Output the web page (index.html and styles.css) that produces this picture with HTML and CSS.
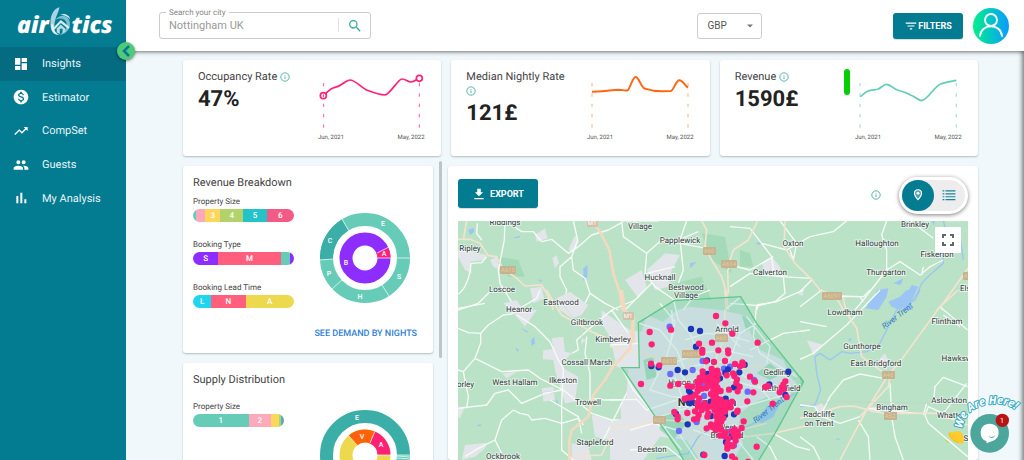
FILE: index.html
```html
<!DOCTYPE html>
<html lang="en">
<head>
<meta charset="utf-8">
<title>airbtics – Insights</title>
<link rel="stylesheet" href="styles.css">
</head>
<body>
<svg class="defs" aria-hidden="true">
  <symbol id="info" viewBox="0 0 24 24"><circle cx="12" cy="12" r="10" fill="none" stroke="currentColor" stroke-width="2"/><path d="M11 7h2v2h-2zM11 11h2v6h-2z" fill="currentColor"/></symbol>
</svg>
<div class="app">
  <aside class="sidebar">
    <a class="logo" href="#" aria-label="airbtics home">
      <span>air</span>
      <svg viewBox="9 0 60 84" width="21" height="29" aria-hidden="true">
        <path d="M36 1C18 6 11 24 10 42C9 62 13 78 30 81C18 70 20 52 24 38C27 24 33 18 36 1Z" fill="#a9d4e3"/>
        <path d="M24 38C34 20 62 20 66 44C69 62 56 78 36 81C52 70 60 60 56 45C52 33 36 30 24 38Z" fill="#7fbdd2"/>
        <path d="M38 22C52 16 66 24 68 38C60 26 48 24 38 22Z" fill="#d6edf4"/>
        <path d="M16 62L40 38L66 59L61 63L40 46L22 65Z" fill="#d6edf4"/>
        <path d="M28 62L40 51L53 63V72L45 76V63H37V78L28 74Z" fill="#b9dce8"/>
        <path d="M12 50C12 70 20 80 36 81C24 76 18 66 18 50Z" fill="#e4f4f8"/>
      </svg>
      <span>tics</span>
    </a>
    <nav>
      <ul class="menu">
        <li><a class="item active" href="#"><svg viewBox="0 0 24 24"><path d="M3 13h8V3H3zm0 8h8v-6H3zm10 0h8V11h-8zm0-18v6h8V3z"/></svg>Insights</a></li>
        <li><a class="item" href="#"><svg viewBox="0 0 24 24"><path d="M12 1C5.900 1 1 5.900 1 12s4.900 11 11 11 11-4.900 11-11S18.100 1 12 1zm1.400 17v2h-2.700v-2c-1.700-.4-3.100-1.500-3.200-3.400h2c.1 1 .8 1.900 2.600 1.900 1.900 0 2.400-1 2.400-1.600 0-.8-.4-1.600-2.700-2.100-2.500-.6-4.200-1.600-4.200-3.700 0-1.700 1.400-2.800 3.100-3.200V4h2.700v2c1.900.5 2.800 1.900 2.900 3.400h-2c-.1-1.100-.6-1.900-2.200-1.900-1.500 0-2.400.7-2.400 1.600 0 .8.700 1.400 2.700 1.900s4.200 1.400 4.200 3.900c0 1.800-1.400 2.800-3.200 3.100z"/></svg>Estimator</a></li>
        <li><a class="item" href="#"><svg viewBox="0 0 24 24"><path d="M16 6l2.300 2.300-4.900 4.900-4-4L2 16.600 3.400 18l6-6 4 4 6.300-6.300L22 12V6z"/></svg>CompSet</a></li>
        <li><a class="item" href="#"><svg viewBox="0 0 24 24"><path d="M16 11a3 3 0 1 0 0-6 3 3 0 0 0 0 6zm-8 0a3 3 0 1 0 0-6 3 3 0 0 0 0 6zm0 2c-2.300 0-7 1.200-7 3.500V19h14v-2.500C15 14.200 10.300 13 8 13zm8 0h-1c1.200.8 2 2 2 3.500V19h6v-2.500c0-2.300-4.700-3.500-7-3.500z"/></svg>Guests</a></li>
        <li><a class="item" href="#"><svg viewBox="0 0 24 24"><path d="M5 9h3v11H5zm6-5h3v16h-3zm6 10h3v6h-3z"/></svg>My Analysis</a></li>
      </ul>
    </nav>
    <button class="collapse" type="button" aria-label="Collapse menu"><svg viewBox="0 0 18 18"><path d="M12 4L7 9l5 5" fill="none" stroke="#067a91" stroke-width="2.500"/></svg></button>
  </aside>

  <div class="main">
    <header class="topbar">
      <fieldset class="search">
        <legend><label for="city">Search your city</label></legend>
        <input id="city" type="text" value="Nottingham UK">
        <button type="button" aria-label="Search"><svg viewBox="0 0 24 24"><path fill="#37aa9d" d="M15.500 14h-.8l-.3-.3A6.500 6.500 0 1 0 13.700 14.400l.3.300v.8l5 5 1.500-1.500zm-6 0a4.500 4.500 0 1 1 0-9 4.500 4.500 0 0 1 0 9z"/></svg></button>
      </fieldset>
      <div class="space wide"></div>
      <div class="currency">
        <select aria-label="Currency"><option>GBP</option></select>
        <svg viewBox="0 0 10 5" aria-hidden="true"><path d="M0 0h10L5 5z" fill="#777"/></svg>
      </div>
      <div class="space"></div>
      <button class="btn filters" type="button"><svg viewBox="0 0 24 24"><path d="M10 18h4v-2h-4zM3 6v2h18V6zm3 7h12v-2H6z"/></svg>FILTERS</button>
      <button class="avatar" type="button" aria-label="Account"><svg viewBox="0 0 36 36"><g fill="none" stroke="#fff" stroke-width="1.800" stroke-linecap="round"><circle cx="18" cy="12" r="6"/><path d="M7 28C8 15 28 15 29 28"/></g></svg></button>
    </header>

    <main class="content">
      <section class="stats">
        <article class="card stat">
          <div class="info"><h2>Occupancy Rate <svg class="i"><use href="#info"/></svg></h2><p>47%</p></div>
          <svg class="chart" viewBox="0 0 120 96">
            <g transform="scale(.33333) translate(-399 -15)" fill="none" stroke="#ff2176">
              <path d="M431 84V220M718 84V220" stroke-width="3" stroke-dasharray="10 21" opacity=".75"/>
              <path d="M430 122C444 110 450 100 465 97C490 92 495 75 510 75C525 75 545 98 562 106C575 111 605 120 615 120C630 118 655 72 665 72C678 72 682 81 693 81C705 80 708 73 718 70" stroke-width="5"/>
              <circle cx="430" cy="122" r="9" fill="#fff" stroke-width="5"/><circle cx="718" cy="70" r="9" fill="#fff" stroke-width="5"/><path d="M430 118V126" stroke-width="3"/>
            </g>
            <text x="18" y="79" text-anchor="middle">Jun, 2021</text><text x="98" y="79" text-anchor="middle">May, 2022</text>
          </svg>
        </article>
        <article class="card stat">
          <div class="info"><h2>Median Nightly Rate <svg class="i"><use href="#info"/></svg></h2><p>121£</p></div>
          <svg class="chart" viewBox="0 0 120 96">
            <g transform="scale(.33333) translate(-411 -15)" fill="none" stroke="#ff6610">
              <path d="M441 84V220M729 84V220" stroke-width="4" stroke-dasharray="10 21" opacity=".4"/>
              <path d="M441 110C490 110 500 105 520 104C530 104 540 108 548 106C556 100 562 66 572 66C582 66 588 98 600 101C612 105 640 109 650 109L678 108C688 102 693 76 703 76C713 76 720 92 729 98" stroke-width="6"/>
            </g>
            <text x="18" y="79" text-anchor="middle">Jun, 2021</text><text x="98" y="79" text-anchor="middle">May, 2022</text>
          </svg>
        </article>
        <article class="card stat">
          <div class="info"><h2>Revenue <svg class="i"><use href="#info"/></svg></h2><p>1590£</p></div>
          <span class="marker"></span>
          <svg class="chart" viewBox="0 0 120 96">
            <g transform="scale(.33333) translate(-405 -15)" fill="none" stroke="#62cdb6">
              <path d="M435 84V220M724 84V220" stroke-width="4" stroke-dasharray="10 21" opacity=".5"/>
              <path d="M436 125C448 116 453 108 465 106C475 104 482 105 490 102C500 97 506 88 515 88C527 88 535 102 547 105C575 112 578 114 595 124C605 130 612 137 620 137C640 133 655 97 677 87C690 82 710 79 724 76" stroke-width="5"/>
            </g>
            <text x="18" y="79" text-anchor="middle">Jun, 2021</text><text x="98" y="79" text-anchor="middle">May, 2022</text>
          </svg>
        </article>
      </section>

      <div class="columns">
        <div class="side">
          <section class="card panel">
            <h2>Revenue Breakdown</h2>
            <div class="split">
              <div class="bars">
                <h3>Property Size</h3>
                <div class="bar"><span class="teal" style="width:3%"></span><span class="pink" style="width:9%"></span><span class="amber" style="width:15%">3</span><span class="lime" style="width:23%">4</span><span class="cyan" style="width:23%">5</span><span class="rose" style="width:27%">6</span></div>
                <h3>Booking Type</h3>
                <div class="bar"><span class="violet" style="width:25%">S</span><span class="coral" style="width:62%">M</span><span class="teal" style="width:9%"></span><span class="violet" style="width:4%"></span></div>
                <h3>Booking Lead Time</h3>
                <div class="bar"><span class="sky" style="width:18%">L</span><span class="coral" style="width:34%">N</span><span class="yellow" style="width:48%">A</span></div>
              </div>
              <svg class="pie" viewBox="-45 -45 90 90">
                <g fill="none">
                  <circle r="38.500" stroke="#66ccb7" stroke-width="13"/>
                  <circle r="38.500" stroke="#3aaea7" stroke-width="13" pathLength="360" stroke-dasharray="61 299" stroke-dashoffset="-178"/>
                  <circle r="19" stroke="#8e2dff" stroke-width="13"/>
                  <circle r="19" stroke="#ff2176" stroke-width="13" pathLength="360" stroke-dasharray="24 336" stroke-dashoffset="-336"/>
                  <path stroke="#fff" stroke-width=".7" d="M12 0H26M12 -5L24 -11M32 0H45M17 27L24 38M-23 22L-33 31M-32 1L-45 2M-16 -27L-23 -39"/>
                </g>
                <text x="18" y="-32">E</text><text x="34" y="21">S</text><text x="-5" y="41">H</text><text x="-36" y="18">P</text><text x="-35" y="-15">C</text><text x="-19" y="7">B</text><text x="19" y="-2">A</text>
              </svg>
            </div>
            <a class="more" href="#">SEE DEMAND BY NIGHTS</a>
          </section>
          <section class="card panel supply">
            <h2>Supply Distribution</h2>
            <div class="split">
              <div class="bars">
                <h3>Property Size</h3>
                <div class="bar short"><span class="teal" style="width:61%">1</span><span class="pink" style="width:25%">2</span><span class="amber" style="width:8%"></span><span class="lime" style="width:3%"></span><span class="cyan" style="width:2%"></span><span class="rose" style="width:1%"></span></div>
              </div>
              <svg class="pie" viewBox="-45 -45 90 90">
                <g fill="none">
                  <circle r="38.500" stroke="#3aaea7" stroke-width="13"/>
                  <circle r="38.500" stroke="#66ccb7" stroke-width="13" pathLength="360" stroke-dasharray="40 320"/>
                  <circle r="19" stroke="#ecd94d" stroke-width="13"/>
                  <circle r="19" stroke="#ff6208" stroke-width="13" pathLength="360" stroke-dasharray="63 297" stroke-dashoffset="-230"/>
                  <circle r="19" stroke="#ff2176" stroke-width="13" pathLength="360" stroke-dasharray="67 293" stroke-dashoffset="-293"/>
                  <path stroke="#fff" stroke-width=".7" d="M12 0H26M5 -12L10 -24M-8 -10L-17 -20M32 0H45M32 1L45 2M32 3L45 4"/>
                </g>
                <text x="-8" y="-35">E</text><text x="-3" y="-16">V</text><text x="16" y="-8">A</text>
              </svg>
            </div>
          </section>
        </div>
        <div class="thumb"></div>

        <section class="card mapcard">
          <div class="toolbar">
            <button class="btn export" type="button"><svg viewBox="0 0 24 24"><path d="M19 9h-4V3H9v6H5l7 7zM4 19v2h16v-2z"/></svg>EXPORT</button>
            <svg class="i"><use href="#info"/></svg>
            <div class="toggle">
              <button class="on" type="button" aria-label="Map view"><svg viewBox="0 0 24 24"><path d="M12 3a6 6 0 0 0-6 6c0 4.500 6 11 6 11s6-6.500 6-11a6 6 0 0 0-6-6z" fill="#4d9fb1" stroke="#fff" stroke-width="2"/><circle cx="12" cy="9" r="2.500" fill="#fff"/></svg></button>
              <button type="button" aria-label="List view"><svg viewBox="0 0 24 24"><path d="M1 4h3v2H1zm0 5h3v2H1zm0 5h3v2H1zm0 5h3v2H1zM6 4h17v2H6zm0 5h17v2H6zm0 5h17v2H6zm0 5h17v2H6z" fill="#16849a"/></svg></button>
            </div>
          </div>
          <div class="map">
            <svg class="canvas" viewBox="458 221 510 239" preserveAspectRatio="xMidYMin slice" role="img" aria-label="Map of listings around Nottingham">
              <rect x="358" y="121" width="710" height="439" fill="#bae2c6"/>
              <!-- north west -->
              <g transform="translate(445 160) scale(.33333)">
                <g class="wood"><path d="M160 290L220 300 240 350 190 350zM690 370L770 350 800 420 730 410zM770 220L840 230 860 340 800 300z"/></g>
                <g class="town"><path d="M39 270L80 275 125 285 120 300 75 305 80 340 60 330 39 290zM270 225L300 205 308 235 275 245zM370 270L390 225 402 245 385 275zM322 295L335 285 342 310 330 325zM135 300L155 290 165 330 145 320zM540 360L590 330 605 380 580 415zM605 330L660 280 705 285 680 330 670 380 630 390zM255 385L290 380 297 415 265 430z"/></g>
                <path class="water" d="M415 325L428 315 427 350 415 362zM70 210L85 203 88 215 75 225zM200 235L225 227 222 233zM280 358L292 362 285 366zM735 310L755 305 735 325z"/>
                <g class="road"><path d="M39 402C60 390 76 350 78 310L110 308 125 290M180 182L178 240 168 290 160 330 165 370 190 410 215 450M97 190L95 220 110 240M180 182L230 215 265 215 290 245 320 238 370 280 400 260 440 225 490 210 530 188M385 182L398 240 380 290 345 320 345 350 365 390 360 415 345 450M380 290L385 330 420 355 435 400 420 430 400 450M435 400L480 430 520 450M530 182L535 230 605 280 600 340 630 380 688 420M605 280L650 240 700 240 760 215M725 182L705 240 715 330 700 370M705 250L785 265M540 450L590 400 620 370M605 340L690 320M39 445L120 430"/></g>
                <g class="major"><path d="M65 182L55 240M39 238L75 238 105 250 130 287 155 290 175 330 210 350 240 378 290 375 310 410 325 450M770 182L785 210 780 260 800 300 830 350 845 400 850 450M875 300L848 330 850 400"/><path class="mway" d="M440 182L465 215 493 270 505 340 525 400 532 450"/></g>
              </g>
              <!-- north east -->
              <g transform="translate(730 160) scale(.33333)">
                <g class="wood"><path d="M30 270L60 280 70 320 30 320z"/></g>
                <g class="town"><path d="M95 310L125 290 150 320 155 340 110 345zM200 400L222 385 218 408z"/></g>
                <path class="water" d="M405 445L430 425 440 390 475 385 470 410 445 450zM490 370L520 355 512 375zM525 410L545 375 565 380 540 425zM75 250L95 245 90 255zM605 185L615 182 612 195zM515 450L535 430 550 450z"/>
                <path class="river" d="M640 182L650 220 640 290 640 310 605 340 575 370 562 400 525 450M690 230L700 300"/>
                <g class="road"><path d="M0 200L60 205 95 250 170 270 240 230 310 215 350 182M150 182L200 250 190 300 180 270M95 250L125 290 130 330 160 350 165 400 135 425 85 437 0 430M0 380L60 340 100 345 155 350 245 355M470 182L455 225 470 270 470 330 400 420 375 450M470 330L510 305 570 345 600 320 640 300M540 182L610 235M335 408L390 410 400 425M210 395L245 360M85 437L80 450M575 345L580 320M650 182L690 182M0 315L60 330 130 290"/></g>
                <g class="major"><path d="M83 182L55 240 10 270 0 300M165 182L162 260 195 310 245 358 270 390 320 415 340 450M714 325L640 430 620 450"/></g>
              </g>
              <!-- south west -->
              <g transform="translate(445 290) scale(.33333)">
                <g class="town"><path d="M175 40L215 30 235 60 275 60 240 110 215 80zM335 25L375 5 430 45 410 75 380 85 345 60zM470 60L510 90 555 120 560 160 500 150 470 100zM320 145L355 140 360 185 380 190 355 215 355 235 400 260 390 335 360 340 330 240 325 210 293 208 295 180 325 178zM290 295L325 290 330 330 295 335zM172 250L215 245 185 265zM410 145L422 150 408 165zM39 350L60 350 45 385 39 380zM60 465L125 458 120 475 90 500 50 510zM440 375L500 390 530 430 500 450 450 440zM555 170L570 170V510H540L560 400 530 400 525 340 545 330zM380 460L430 470 440 510 380 510zM510 460L570 440V510H500z"/></g>
                <path class="water" d="M258 150L268 140 270 160 260 168zM210 172L222 180 218 186zM335 325L340 340 333 345zM95 405L110 403 105 410zM228 115L250 125 245 128z"/>
                <g class="road"><path d="M39 115L70 128 107 130 130 105 175 75 200 72 215 60 275 25 285 0M107 130L107 160 90 205 55 245 70 320 65 355M90 205L170 245 250 240 285 265 355 300 440 370 500 390 570 390M39 355L125 345 150 310 190 300 230 340 300 310 350 300M205 360L170 390 150 450 100 475 60 500M205 360L225 370 250 375 260 390 300 385 350 400 400 385 415 405M215 75L270 110 315 155 340 210 355 235 350 340 350 420 350 480 385 510M380 190L400 180 395 150 440 110 500 60 570 30M425 140L420 190 435 250 435 330M500 60L550 130 570 140M440 325L480 330 570 328M475 450L510 380 570 260M315 330L400 380 410 430M39 240L55 245M39 60L100 40 140 0M150 450L170 490"/></g>
                <g class="major"><path d="M305 0L330 45 350 75 440 125 510 155 570 165M380 500L470 495 490 450 520 415 570 412"/><path class="mway" d="M525 0L535 60 565 80 555 175 510 220 480 270 445 315 430 380 380 420 373 450 373 510"/></g>
                <path d="M300 325C280 310 300 295 330 310M320 0L390 90 380 200M430 60L410 140M400 300L430 420" fill="none" stroke="#cfdcd5" stroke-width="2"/>
              </g>
              <!-- Nottingham -->
              <g transform="translate(610 290) scale(.33333)">
                <path class="town" d="M0 140L40 150 60 120 95 125 110 75 160 95 200 60 240 50 330 60 400 75 430 150 450 180 520 210 540 260 560 280 530 330 470 320 430 340 390 370 385 430 400 460 370 510H270L230 450 150 440 100 510H0L0 400 45 380 55 240 20 230z"/>
                <path class="water" d="M440 390L470 350 515 330 490 380 455 400z"/>
                <path class="river" d="M140 505L235 490 265 440 320 405 380 430 430 400 470 385 510 340 555 310"/>
                <path class="wood" d="M100 210L130 200 140 260 110 270zM145 380L200 360 230 400 190 450 150 420zM440 250L480 220 520 250 480 270zM395 75L430 100 410 125zM310 410L350 400 350 440 310 450z"/>
                <g class="road"><path d="M0 165L88 160M192 35L205 90 240 130 260 180M185 60L190 130 170 200 120 300 185 320 280 330M88 100L150 120 200 180 225 240 290 250M392 20L345 60 345 140 320 200 310 300M440 100L390 130 370 180 340 250M440 45L500 35 580 0M440 45L430 140 450 190 510 230 560 260M225 150L290 130 350 135 420 155M110 220L200 215 270 190 340 180 430 200M0 330L80 328 110 360 200 330M35 233L70 300 130 370 215 480M150 380L240 350 310 360 400 350 540 310M330 370L345 430 390 460 430 510M250 420L310 440 380 435M60 420L130 400 200 420 260 510M440 440L480 470 500 510M195 260L215 320 205 380M390 250L440 280 490 340M420 180L520 130 600 120M220 60L250 20 300 0M285 190L280 300 230 370M240 230L330 215 400 240M490 430L560 470 600 480M180 200L230 280 300 300M150 40L195 95 180 160M320 100L390 170M410 80L480 170 470 220M360 270L470 300M60 480L170 470 220 510"/></g>
                <g class="major"><path d="M345 0L350 100 335 180 310 270M0 170L95 190 170 215 250 260M0 415L60 410 160 390 250 395 350 420 410 440 490 430 600 405M240 180L230 280 250 360 275 430 265 510M310 270L430 230 560 250M350 430L470 400M210 180L320 160"/><path class="mway" d="M35 0L45 60 70 85 60 175 0 240M70 90L70 160"/></g>
                <path class="hull" d="M35 233H88L85 98 192 32 392 20 440 100 580 275 520 385 495 430 447 510 440 530H230L205 480z"/>
              </g>
              <!-- south east -->
              <g transform="translate(800 290) scale(.33333)">
                <g class="town"><path d="M20 150L70 165 40 195 30 170zM240 205L255 190 265 210 260 240 235 225zM45 350L65 340 75 355 60 375zM210 350L240 350 240 370 210 365z"/></g>
                <path class="water" d="M200 45L240 0 255 10 225 55zM275 50L265 35 300 20 320 0 350 0 330 40 300 60zM145 148L155 145 150 155zM105 445L122 447 115 450z"/>
                <path class="river" d="M360 0L345 30 290 60 265 110 240 160 200 185 150 190 125 185 90 210 60 190 45 200 50 250 62 300 45 345 0 350"/>
                <g class="road"><path d="M0 50L65 0M0 95L80 110M0 208L40 190 140 105 240 0M0 345L45 350 60 380 90 320 130 270 180 252 250 265M270 280L275 380 285 440 310 510M375 375L385 350 430 370 500 280M400 340L405 290 430 262 503 290M430 60L420 50 503 120M375 375L385 400 503 500M175 390L205 440 210 510M0 440L40 470 60 510M205 355L350 370M430 75L480 110M120 20L190 20 210 0M370 375L380 340M65 380L120 400 180 380"/></g>
                <g class="major"><path d="M60 0L130 25 140 70 170 115 185 200 240 240 270 255M475 0L420 50 300 215 265 255 200 360 120 510M0 385L120 350 160 348 200 358 250 370 410 370 503 405M270 260L265 290 180 380"/></g>
                <path class="hull" d="M0 260L10 275 0 298"/>
                <path d="M130 335L380 340 503 345M0 340L130 335" fill="none" stroke="#c3d1c9" stroke-width="2"/>
              </g>

              <g class="shield">
                <g fill="#c7b093"><rect x="500" y="266" width="16" height="8" rx="1"/><rect x="703" y="247" width="13" height="8" rx="1"/><rect x="721" y="260" width="16" height="8" rx="1"/><rect x="822" y="292" width="20" height="8" rx="1"/><rect x="882" y="371" width="13" height="8" rx="1"/><rect x="884" y="412" width="13" height="8" rx="1"/><rect x="963" y="272" width="13" height="8" rx="1"/><rect x="661" y="357" width="16" height="8" rx="1"/><rect x="682" y="350" width="19" height="8" rx="1"/><rect x="715" y="334" width="13" height="8" rx="1"/><rect x="653" y="416" width="13" height="8" rx="1"/></g>
                <g fill="#d6c0ab"><rect x="587" y="219" width="11" height="8" rx="1"/><rect x="623" y="312" width="11" height="8" rx="1"/></g>
                <g class="num"><text x="508" y="272">A610</text><text x="709" y="253">A60</text><text x="729" y="266">A614</text><text x="832" y="298">A6097</text><text x="888" y="377">A46</text><text x="890" y="418">A52</text><text x="969" y="278">A46</text><text x="669" y="363">A610</text><text x="691" y="356">A6514</text><text x="721" y="340">A60</text><text x="659" y="422">A52</text></g>
                <g class="num light"><text x="592" y="225">M1</text><text x="628" y="318">M1</text></g>
              </g>

              <g class="place">
                <text x="505" y="225">Riddings</text><text x="640" y="221">Newstead</text><text x="640" y="229">Village</text><text x="680" y="243">Papplewick</text><text x="470" y="251">Ripley</text><text x="502" y="292">Loscoe</text><text x="660" y="280">Hucknall</text><text x="686" y="290">Bestwood</text><text x="686" y="298">Village</text><text x="561" y="305">Eastwood</text><text x="519" y="312">Heanor</text><text x="587" y="325">Giltbrook</text><text x="613" y="342">Kimberley</text><text x="587" y="365">Cossall Marsh</text><text x="563" y="383">Ilkeston</text><text x="515" y="385">West Hallam</text><text x="462" y="387">Morley</text><text x="588" y="405">Trowell</text><text x="595" y="445">Stapleford</text><text x="503" y="459">Ockbrook</text><text x="652" y="452">Beeston</text><text x="727" y="332">Arnold</text><text x="777" y="375">Gedling</text><text x="781" y="391">Netherfield</text><text x="691" y="385">Hyson Green</text><text class="city" x="707" y="406">Nottingham</text><text x="727" y="430">West</text><text x="727" y="438">Bridgford</text>
                <text x="915" y="227">Brinkley</text><text x="793" y="246">Oxton</text><text x="877" y="246">Halloughton</text><text x="937" y="257">Fiskerton</text><text x="770" y="275">Calverton</text><text x="886" y="275">Thurgarton</text><text x="971" y="291">Elston</text><text x="845" y="315">Lowdham</text><text x="947" y="324">Flintham</text><text x="862" y="349">Gunthorpe</text><text x="876" y="366">East Bridgford</text><text x="964" y="361">Hawksworth</text><text x="949" y="403">Aslockton</text><text x="892" y="410">Bingham</text><text x="819" y="417">Radcliffe</text><text x="819" y="426">on Trent</text><text x="952" y="418">Whatton</text><text x="984" y="441">Scarrington</text>
                <text class="stream" transform="translate(770 412) rotate(-38)">River Trent</text><text class="stream" transform="translate(899 318) rotate(-38)">River Trent</text>
              </g>

              <g class="dots" transform="translate(610 290) scale(.33333)">
                <path stroke="#6a6cff" d="M179 110h0M181 252h0M248 240h0M278 213h0M432 270h0M413 305h0M207 423h0M260 396h0M282 318h0M342 236h0M372 466h0M360 230h0M278 285h0M196 370h0M360 425h0M290 292h0M275 340h0"/>
                <path stroke="#1b36b8" d="M243 117h0M270 123h0M258 170h0M124 228h0M146 232h0M203 240h0M225 247h0M535 245h0M404 224h0M388 247h0M291 211h0M354 238h0M346 248h0M372 292h0M478 283h0M526 315h0M237 302h0M242 310h0M240 340h0M233 403h0M198 372h0M372 373h0M347 326h0M344 498h0M280 494h0M348 456h0M292 252h0M330 265h0M303 378h0M345 375h0M365 440h0M325 360h0M232 330h0M245 337h0M302 335h0"/>
                <path stroke="#ff2176" d="M318 78h0M346 100h0M367 131h0M183 119h0M119 126h0M125 163h0M123 221h0M148 226h0M93 282h0M181 287h0M205 282h0M443 158h0M267 161h0M306 158h0M277 180h0M277 188h0M325 181h0M354 181h0M355 190h0M288 214h0M312 216h0M345 213h0M397 217h0M399 224h0M390 229h0M375 222h0M420 260h0M435 275h0M430 307h0M412 334h0M474 288h0M466 291h0M526 274h0M520 284h0M522 297h0M509 307h0M530 321h0M515 292h0M488 341h0M193 366h0M203 380h0M203 388h0M232 369h0M224 326h0M235 323h0M401 394h0M395 414h0M440 470h0M283 495h0M366 499h0M375 508h0M414 515h0M233 288h0M246 290h0M265 290h0M263 303h0M270 277h0M278 244h0M278 256h0M269 264h0M262 275h0M285 270h0M295 262h0M305 237h0M306 250h0M314 257h0M310 268h0M322 270h0M300 276h0M317 281h0M307 289h0M322 292h0M294 282h0M310 300h0M332 303h0M357 299h0M369 250h0M373 258h0M381 268h0M379 279h0M389 290h0M383 304h0M350 256h0M325 253h0M322 242h0M256 315h0M246 322h0M268 325h0M263 338h0M255 364h0M278 348h0M275 360h0M266 375h0M252 388h0M262 386h0M285 340h0M290 355h0M295 370h0M292 380h0M310 320h0M312 334h0M322 326h0M332 329h0M327 340h0M337 340h0M348 337h0M357 343h0M366 335h0M362 352h0M349 354h0M340 358h0M331 350h0M320 350h0M309 345h0M302 350h0M314 361h0M324 368h0M334 370h0M345 365h0M318 379h0M329 381h0M340 385h0M334 395h0M322 394h0M318 405h0M303 403h0M290 415h0M308 411h0M329 407h0M333 418h0M330 437h0M345 427h0M343 438h0M355 445h0M365 424h0M374 418h0M383 425h0M377 433h0M386 437h0M376 445h0M377 452h0M353 460h0M352 470h0M360 465h0M368 468h0M352 476h0M383 362h0M381 366h0M305 283h0M289 294h0M275 296h0M318 310h0M303 312h0M264 350h0M317 420h0M371 432h0"/>
              </g>
            </svg>
            <button class="full" type="button" aria-label="Full screen"><svg viewBox="0 0 12 12"><path d="M1 4V1h3M8 1h3v3M11 8v3H8M4 11H1V8" fill="none" stroke="#666" stroke-width="2"/></svg></button>
          </div>
        </section>
      </div>
    </main>
  </div>

  <button class="chat" type="button" aria-label="We are here! 1 new message">
    <svg viewBox="945 388 79 68">
      <path id="arc" d="M962 429C964 415 974 405 992 404C1006 403 1014 407 1026 418" fill="none"/>
      <g transform="translate(800 290) scale(.33333)">
        <path d="M446 432C444 424 452 424 456 428C462 424 468 423 476 424C488 425 492 442 492 456C488 462 480 461 470 458C458 454 446 444 446 432Z" fill="#fecb2b"/><path d="M448 430C450 443 462 453 474 457M436 450L446 458" fill="none" stroke="#f6b914" stroke-width="3"/>
        <circle cx="569" cy="430" r="58" fill="#4ca69b"/>
        <path d="M569 401C586 401 596 412 596 428C596 440 588 450 577 453L560 460 559 453C548 450 542 440 542 428C542 412 552 401 569 401Z" fill="#fff"/>
        <path d="M568 440C573 444 578 443 584 438" fill="none" stroke="#4ca69b" stroke-width="3"/>
        <circle cx="607" cy="391" r="20" fill="#b91414"/>
      </g>
      <text class="count" x="1002" y="423">1</text>
      <text class="here"><textPath href="#arc">We Are Here!</textPath></text>
    </svg>
  </button>
</div>
</body>
</html>
```
FILE: styles.css
```css
* { box-sizing: border-box; }
body { margin: 0; font-family: Roboto, "Liberation Sans", sans-serif; font-size: 11px; color: #444; overflow: hidden; text-rendering: geometricPrecision; }
h2, h3, p, ul { margin: 0; padding: 0; font-weight: 400; }
button { font: inherit; border: 0; padding: 0; cursor: pointer; }
.defs { position: absolute; width: 0; height: 0; }
.app { display: flex; height: 100vh; position: relative; overflow: hidden; }

.sidebar { width: 126px; flex: none; background: #037b91; position: relative; z-index: 3; }
.logo { display: flex; align-items: center; height: 47px; padding-left: 17px; color: #fff; text-decoration: none; font: italic 800 23px/30px "Open Sans", "Liberation Sans", sans-serif; }
.logo svg { margin: 0 1px 4px; }
.menu { list-style: none; display: grid; grid-auto-rows: 1fr; height: 168px; }
.item { display: flex; align-items: center; gap: 13px; height: 100%; padding-left: 13px; color: #e6f4f6; text-decoration: none; }
.item svg { width: 16px; height: 16px; fill: #fff; }
.item.active { background: #046b81; }
.collapse { position: absolute; right: -9px; top: 42px; width: 18px; height: 18px; border-radius: 50%; background: #4fca7b; box-shadow: 0 1px 3px rgba(0,0,0,.5); }
.collapse svg { display: block; }

.main { flex: 1; min-width: 0; display: flex; flex-direction: column; }
.topbar { display: flex; align-items: center; height: 51px; flex: none; padding: 0 15px 0 33px; background: #fff; box-shadow: 0 1px 4px rgba(0,0,0,.55); position: relative; z-index: 2; }
.space { flex: 2; }
.space.wide { flex: 5; }
.search { display: flex; align-items: center; width: 212px; height: 30px; margin: 0 0 4px; padding: 0 0 4px 6px; border: 1px solid #ccc; border-radius: 3px; min-width: 0; }
.search legend { padding: 0 3px; font-size: 8px; line-height: 8px; color: #888; }
.search input { flex: 1; min-width: 0; border: 0; outline: 0; padding: 0 3px; font: inherit; line-height: 13px; color: #999; background: none; }
.search button { width: 32px; height: 14px; border-left: 1px solid #e2e2e2; background: none; display: grid; place-items: center; }
.search button svg { width: 16px; height: 16px; }
.currency { position: relative; width: 65px; height: 26px; }
.currency select { appearance: none; width: 100%; height: 100%; padding: 0 9px; border: 1px solid #ccc; border-radius: 3px; background: #fff; font: 10px Roboto, sans-serif; color: #555; }
.currency svg { position: absolute; right: 9px; top: 11px; width: 6px; height: 4px; pointer-events: none; }
.btn { display: flex; align-items: center; justify-content: center; background: #037b91; color: #fff; border-radius: 3px; font-size: 9px; font-weight: 700; box-shadow: 0 1px 1px rgba(0,0,0,.15); }
.btn svg { fill: #fff; }
.filters { width: 70px; height: 26px; }
.filters svg { width: 14px; height: 14px; }
.avatar { width: 36px; height: 36px; margin-left: 10px; border-radius: 50%; background: linear-gradient(90deg, #00f08c, #0a9bff); }
.avatar svg { display: block; }

.content { flex: 1; min-height: 0; display: flex; flex-direction: column; gap: 10px; padding: 9px 46px 0 57px; background: #f0f8fb; box-shadow: inset -6px 0 4px -4px rgba(0,0,0,.5); }
.card { background: #fff; border-radius: 3px; box-shadow: 0 1px 2px rgba(60,80,90,.35); }
.stats { display: grid; grid-template-columns: repeat(3, 1fr); gap: 10px; flex: none; }
.stat { display: flex; height: 96px; padding-right: 8px; }
.info { flex: 1; min-width: 0; padding: 10px 10px 0 15px; }
.info h2 { font-size: 11px; line-height: 14px; }
.i { width: 10px; height: 10px; color: #37a69c; vertical-align: -2px; }
.info p { font-size: 22px; font-weight: 700; line-height: 32px; color: #222; }
.chart { width: 120px; height: 96px; flex: none; }
.chart text { font-size: 6px; fill: #555; }
.marker { width: 6px; height: 26px; margin-top: 9px; border-radius: 3px; background: #06cf06; }

.columns { flex: 1; min-height: 0; display: flex; }
.side { width: 250px; flex: none; display: flex; flex-direction: column; gap: 10px; }
.thumb { width: 3px; height: 197px; margin: -5px 6px 0; border-radius: 2px; background: #c1c4c6; flex: none; }
.panel { padding: 10px 10px 12px; flex: none; }
.panel h2 { font-size: 11px; line-height: 14px; margin-bottom: 7px; }
.supply h2 { margin-bottom: 15px; }
.split { display: flex; justify-content: space-between; }
.bars { width: 101px; }
.bars h3 { font-size: 8px; line-height: 10px; margin-bottom: 2px; white-space: nowrap; }
.bar { display: flex; height: 13px; border-radius: 7px; overflow: hidden; }
.bar + h3 { margin-top: 18px; }
.bar span { text-align: center; color: #fff; font-size: 8px; line-height: 13px; font-weight: 500; }
.short { width: 91px; }
.teal { background: #66ccb7; } .pink { background: #fca9bc; } .amber { background: #ffd65c; }
.lime { background: #b3d26b; } .cyan { background: #24c3c9; } .rose { background: #f25b86; }
.violet { background: #8e2dff; } .coral { background: #ff5f7c; } .sky { background: #1fd5f0; } .yellow { background: #ecd94d; }
.pie { width: 90px; height: 90px; margin: 16px 13px 0 0; flex: none; }
.supply .pie { margin-top: 8px; }
.pie text { fill: #fff; font-size: 7px; font-weight: 500; text-anchor: middle; }
.more { display: block; margin: 19px 6px 0; text-align: right; font-size: 9px; line-height: 14px; font-weight: 500; color: #2f7fd6; text-decoration: none; }

.mapcard { flex: 1; min-width: 0; padding: 11px 10px 0; display: flex; flex-direction: column; }
.toolbar { display: flex; align-items: center; height: 36px; margin-bottom: 8px; flex: none; }
.export { width: 80px; height: 29px; gap: 4px; margin: 0 auto 3px 0; }
.export svg { width: 14px; height: 14px; }
.toggle { display: flex; margin-left: 18px; width: 69px; height: 37px; border: 3px solid #fff; border-radius: 19px; background: #ededed; box-shadow: 0 1px 4px rgba(0,0,0,.5); }
.toggle button { flex: 1; border-radius: 50%; background: none; display: grid; place-items: center; }
.toggle .on { background: #037b91; }
.toggle svg { width: 14px; height: 14px; }
.map { flex: 1; min-height: 0; position: relative; overflow: hidden; }
.canvas { display: block; width: 100%; height: 100%; }
.full { position: absolute; top: 6px; right: 7px; width: 26px; height: 26px; background: #fff; border-radius: 1px; display: grid; place-items: center; }
.full svg { width: 12px; height: 12px; }

.town { fill: #e2e5e9; }
.wood { fill: #a5dab9; }
.water { fill: #9cc5f5; }
.river { fill: none; stroke: #9cc5f5; stroke-width: 4; }
.road { fill: none; stroke: #f7fbf8; stroke-width: 4; stroke-linejoin: round; }
.major { fill: none; stroke: #f4e3cf; stroke-width: 5; stroke-linejoin: round; }
.mway { stroke: #f3d9bf; stroke-width: 8; }
.hull { fill: rgba(105,195,180,.22); stroke: #5fc78a; stroke-width: 4; }
.num { font-size: 6px; text-anchor: middle; fill: #dfd08c; }
.light { fill: #fff; }
.place { font-size: 8px; text-anchor: middle; fill: #333a3d; stroke: rgba(255,255,255,.6); stroke-width: 2; paint-order: stroke; stroke-linejoin: round; }
.city { font-size: 11px; font-weight: 700; }
.stream { fill: #3279bd; font-style: italic; stroke: none; }
.dots path { stroke-width: 19; stroke-linecap: round; }

.chat { position: absolute; right: 0; bottom: 4px; z-index: 4; width: 79px; height: 68px; background: none; }
.chat svg { display: block; overflow: visible; }
.count { font-size: 7px; text-anchor: middle; fill: #fff; }
.here { font: italic 700 11px "Open Sans", sans-serif; fill: #fff; stroke: #35aac0; stroke-width: 2; paint-order: stroke; stroke-linejoin: round; }
```
